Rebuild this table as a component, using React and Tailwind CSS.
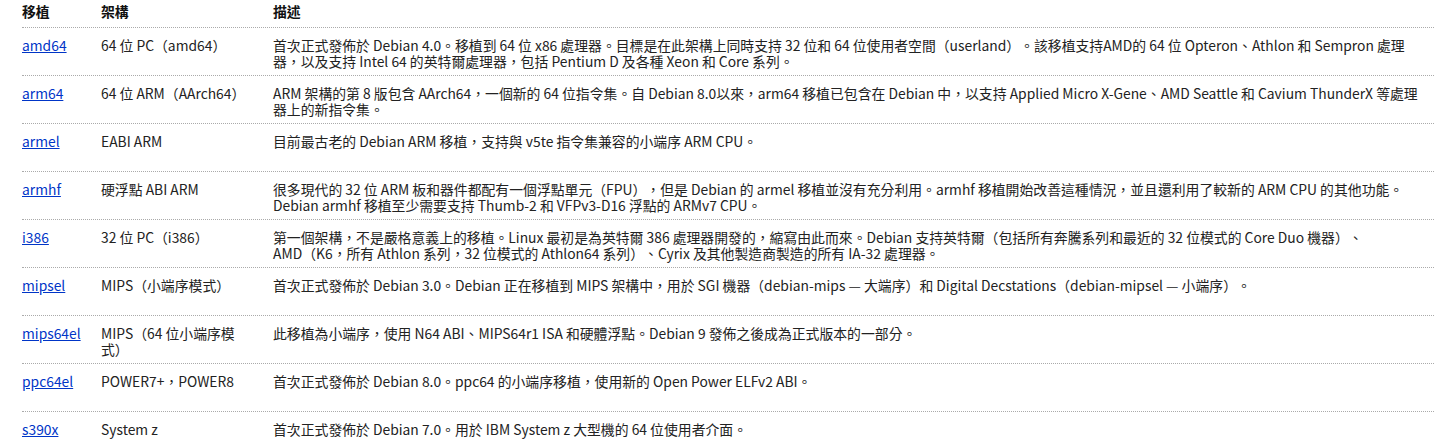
import React from "react";

const ports = [
  {
    name: "amd64",
    arch: "64 位 PC（amd64）",
    desc: "首次正式發佈於 Debian 4.0。移植到 64 位 x86 處理器。目標是在此架構上同時支持 32 位和 64 位使用者空間（userland）。該移植支持AMD的 64 位 Opteron、Athlon 和 Sempron 處理器，以及支持 Intel 64 的英特爾處理器，包括 Pentium D 及各種 Xeon 和 Core 系列。",
  },
  {
    name: "arm64",
    arch: "64 位 ARM（AArch64）",
    desc: "ARM 架構的第 8 版包含 AArch64，一個新的 64 位指令集。自 Debian 8.0以來，arm64 移植已包含在 Debian 中，以支持 Applied Micro X-Gene、AMD Seattle 和 Cavium ThunderX 等處理器上的新指令集。",
  },
  {
    name: "armel",
    arch: "EABI ARM",
    desc: "目前最古老的 Debian ARM 移植，支持與 v5te 指令集兼容的小端序 ARM CPU。",
  },
  {
    name: "armhf",
    arch: "硬浮點 ABI ARM",
    desc: "很多現代的 32 位 ARM 板和器件都配有一個浮點單元（FPU），但是 Debian 的 armel 移植並沒有充分利用。armhf 移植開始改善這種情況，並且還利用了較新的 ARM CPU 的其他功能。Debian armhf 移植至少需要支持 Thumb-2 和 VFPv3-D16 浮點的 ARMv7 CPU。",
  },
  {
    name: "i386",
    arch: "32 位 PC（i386）",
    desc: "第一個架構，不是嚴格意義上的移植。Linux 最初是為英特爾 386 處理器開發的，縮寫由此而來。Debian 支持英特爾（包括所有奔騰系列和最近的 32 位模式的 Core Duo 機器）、AMD\u2060（K6，所有 Athlon 系列，32 位模式的 Athlon64 系列）、Cyrix 及其他製造商製造的所有 IA-32 處理器。",
  },
  {
    name: "mipsel",
    arch: "MIPS（小端序模式）",
    desc: "首次正式發佈於 Debian 3.0。Debian 正在移植到 MIPS 架構中，用於 SGI 機器（debian-mips — 大端序）和 Digital Decstations（debian-mipsel — 小端序）。",
  },
  {
    name: "mips64el",
    arch: "MIPS（64 位小端序模式）",
    desc: "此移植為小端序，使用 N64 ABI、MIPS64r1 ISA 和硬體浮點。Debian 9 發佈之後成為正式版本的一部分。",
  },
  {
    name: "ppc64el",
    arch: "POWER7+，POWER8",
    desc: "首次正式發佈於 Debian 8.0。ppc64 的小端序移植，使用新的 Open Power ELFv2 ABI。",
  },
  {
    name: "s390x",
    arch: "System z",
    desc: "首次正式發佈於 Debian 7.0。用於 IBM System z 大型機的 64 位使用者介面。",
  },
];

const PortRow = ({ port }) => (
  <div className="grid grid-cols-[79px_172px_1fr] h-[48px] pt-[9px] border-b border-dotted border-[#aaa]">
    <div>
      <a href="#" className="text-[#0035c7] underline">
        {port.name}
      </a>
    </div>
    <div className="pr-[25px]">{port.arch}</div>
    <div className="pr-[6px]">{port.desc}</div>
  </div>
);

export default function App() {
  return (
    <div
      className="bg-white text-[#222] text-[13.85px] leading-[16px] pl-[22px] h-[446px] overflow-hidden [text-spacing-trim:space-all]"
      style={{ fontFamily: '"Noto Sans CJK TC", "Noto Sans", sans-serif' }}
    >
      {/* Header */}
      <div className="grid grid-cols-[79px_172px_1fr] h-[28px] pt-[3px] font-bold text-[#111] border-b border-dotted border-[#aaa]">
        <div>移植</div>
        <div>架構</div>
        <div>描述</div>
      </div>

      {ports.map((port) => (
        <PortRow key={port.name} port={port} />
      ))}
    </div>
  );
}
